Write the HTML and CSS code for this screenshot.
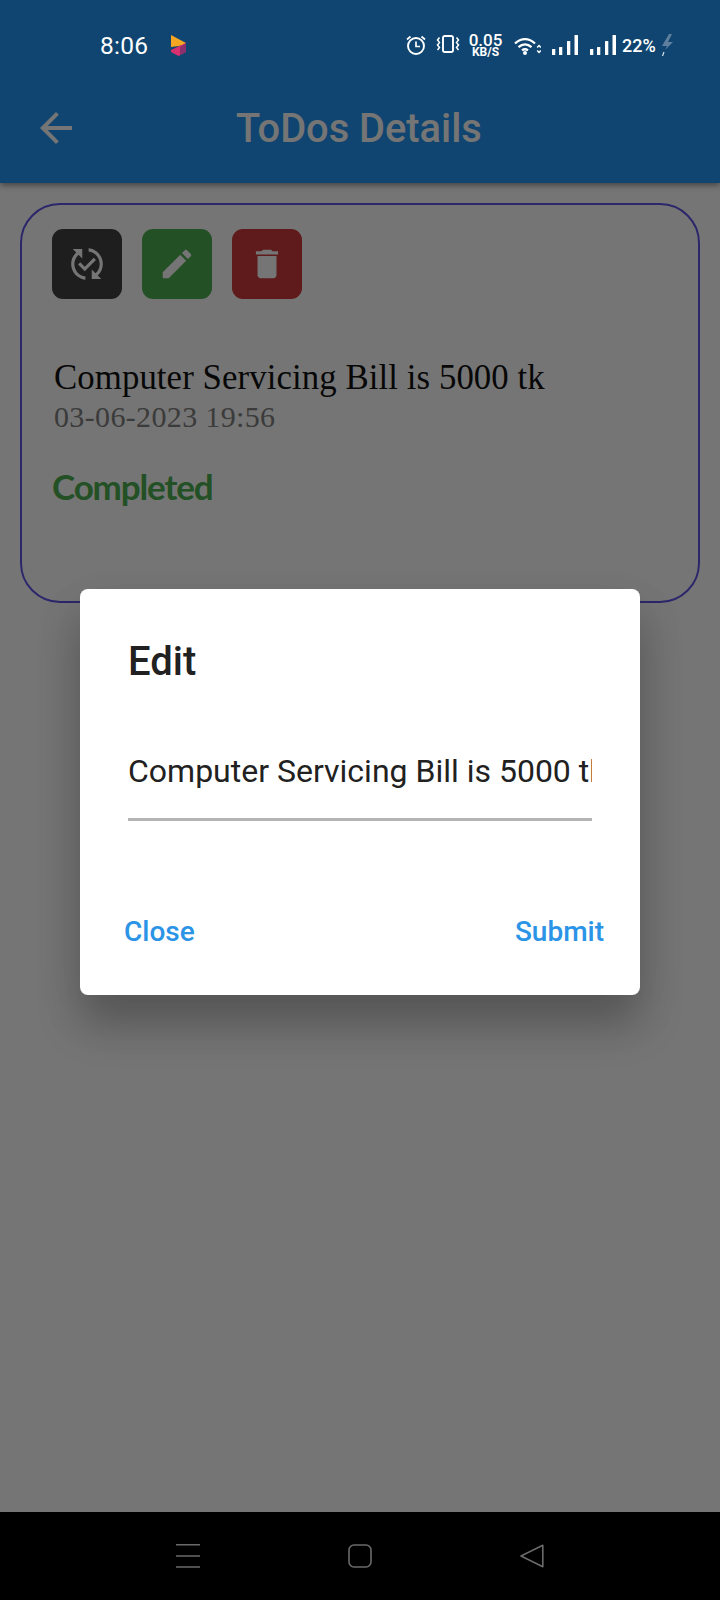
FILE: index.html
```html
<!DOCTYPE html>
<html lang="en">
<head>
<meta charset="utf-8">
<title>ToDos Details</title>
<link rel="stylesheet" href="styles.css">
</head>
<body>
<div class="screen">
  <header class="appbar">
    <div class="status">
      <span class="time">8:06</span>
      <svg class="logo" viewBox="0 0 15 21" width="15" height="21">
        <polygon points="0,0 15,8 15,9 8,11 0,12" fill="#f5a623"/>
        <polygon points="0,15 15,8 15,17 7.5,21 0,17" fill="#d9306f"/>
        <polygon points="15,8 15,17 9,20 9,12" fill="#8c2f6f"/>
      </svg>
      <div class="status-right">
        <svg class="ic-alarm" viewBox="0 0 20 20" width="20" height="20" fill="none" stroke="#fff" stroke-width="1.9"><circle cx="10" cy="11" r="8"/><path d="M10 6.5V11.5H14" stroke-width="1.7"/><path d="M1 4.5 4.5 1.5M19 4.5 15.5 1.5" stroke-width="1.7"/></svg>
        <svg class="ic-vib" viewBox="0 0 24 18" width="24" height="18" fill="none" stroke="#fff" stroke-width="1.9"><rect x="7" y="1" width="10" height="16" rx="1.8"/><path d="M3.500 2.500 1.500 5l2 2.500-2 2.500 2 2.500 -2 2.500M20.500 2.500l2 2.500-2 2.500 2 2.500-2 2.500 2 2.500" stroke-width="1.500"/></svg>
        <div class="speed"><span class="speed-n">0.05</span><span class="speed-u">KB/S</span></div>
        <svg class="ic-wifi" viewBox="0 0 27 18" width="27" height="18" fill="none" stroke="#fff" stroke-width="2.300"><path d="M1 6.500C7 .6 15 .6 21 6.500M4.500 10.200c4-3.700 9-3.700 13 0M8 13.400c1.900-1.500 4.100-1.500 6 0"/><circle cx="11" cy="16" r="2" fill="#fff" stroke="none"/><path d="M23.200 10.500 25 8.600l1.800 1.900M23.200 13.500 25 15.400l1.800-1.900" stroke-width="1.500"/></svg>
        <svg class="ic-sig" viewBox="0 0 26 20" width="26" height="20" fill="#fff"><rect x="0" y="14" width="3.300" height="6" rx=".5"/><rect x="7" y="12" width="3.300" height="8" rx=".5"/><rect x="15" y="6" width="3.300" height="14" rx=".5"/><rect x="22.500" y="0" width="3.500" height="20" rx=".5"/></svg>
        <svg class="ic-sig ic-sig2" viewBox="0 0 26 20" width="26" height="20" fill="#fff"><rect x="0" y="14" width="3.300" height="6" rx=".5"/><rect x="7" y="12" width="3.300" height="8" rx=".5"/><rect x="15" y="6" width="3.300" height="14" rx=".5"/><rect x="22.500" y="0" width="3.500" height="20" rx=".5"/></svg>
        <span class="batt">22%</span>
        <svg class="ic-bolt" viewBox="0 0 13 22" width="13" height="22"><polygon points="8,0 1,12 6,12 4,16 12,8 7,8 11,0" fill="#5f7f9e"/><path d="M3 18 1.500 22" stroke="#dfe7ee" stroke-width="1.200"/></svg>
      </div>
    </div>
    <div class="toolbar">
      <svg class="back" viewBox="0 0 24 24" width="48" height="48"><path d="M20 11H7.830l5.590-5.590L12 4l-8 8 8 8 1.410-1.410L7.830 13H20v-2z"/></svg>
      <h1 class="page-title">ToDos Details</h1>
    </div>
  </header>

  <main class="content">
    <section class="card">
      <div class="actions">
        <button class="act act-dark"><svg viewBox="0 0 24 24" width="38" height="38"><path d="M17.660 9.530l-7.070 7.070-4.240-4.240 1.410-1.410 2.830 2.830 5.660-5.660 1.410 1.410zM4 12c0-2.330 1.020-4.420 2.620-5.880L9 8.500v-6H3l2.200 2.200C3.240 6.520 2 9.110 2 12c0 5.190 3.950 9.450 9 9.950v-2.020C7.060 19.440 4 16.070 4 12zm18 0c0-5.190-3.950-9.450-9-9.950v2.020c3.940.49 7 3.860 7 7.930 0 2.330-1.020 4.420-2.620 5.880L15 15.500v6h6l-2.200-2.200c1.960-1.820 3.200-4.410 3.200-7.300z"/></svg></button>
        <button class="act act-green"><svg viewBox="0 0 24 24" width="38" height="38"><path d="M3 17.250V21h3.750L17.810 9.940l-3.750-3.750L3 17.250zM20.710 7.040c.39-.39.39-1.020 0-1.410l-2.340-2.340c-.39-.39-1.020-.39-1.410 0l-1.830 1.830 3.750 3.750 1.830-1.830z"/></svg></button>
        <button class="act act-red"><svg viewBox="0 0 24 24" width="38" height="38"><path d="M6 19c0 1.100.9 2 2 2h8c1.100 0 2-.9 2-2V7H6v12zM19 4h-3.500l-1-1h-5l-1 1H5v2h14V4z"/></svg></button>
      </div>
      <p class="todo-title">Computer Servicing Bill is 5000 tk</p>
      <p class="todo-date">03-06-2023 19:56</p>
      <p class="todo-status">Completed</p>
    </section>
  </main>

  <nav class="navbar">
    <svg viewBox="0 0 24 24" width="24" height="24" stroke="#6a6a6a" stroke-width="1.600" fill="none"><path d="M0 .8H24M0 12H24M0 23H24"/></svg>
    <svg viewBox="0 0 24 24" width="24" height="24" stroke="#6a6a6a" stroke-width="1.600" fill="none"><rect x="1" y="1" width="22" height="22" rx="5"/></svg>
    <svg viewBox="0 0 24 24" width="24" height="24" stroke="#6a6a6a" stroke-width="1.600" fill="none" stroke-linejoin="round"><path d="M22.800 1.300V22.700L1 12z"/></svg>
  </nav>

  <div class="scrim">
    <div class="dialog">
      <h2 class="dialog-title">Edit</h2>
      <div class="field"><span class="field-text">Computer Servicing Bill is 5000 tk</span></div>
      <div class="dialog-actions">
        <span class="dialog-btn">Close</span>
        <span class="dialog-btn">Submit</span>
      </div>
    </div>
  </div>
</div>
</body>
</html>
```

FILE: styles.css
```css
* { box-sizing: border-box; }
html, body { margin: 0; padding: 0; }
body { font-family: Roboto, "Liberation Sans", sans-serif; background: #fff; }
.screen {
  position: relative;
  width: 720px;
  height: 1600px;
  display: flex;
  flex-direction: column;
  overflow: hidden;
  background: #fff;
}
.appbar {
  height: 183px;
  background: #2196f3;
  box-shadow: 0 2px 6px rgba(0, 0, 0, .45);
  flex: none;
}
.status {
  position: relative;
  z-index: 2;
  height: 90px;
  display: flex;
  align-items: center;
  padding-left: 100px;
  color: #fff;
}
.time { font-size: 24.5px; width: 48px; letter-spacing: .3px; }
.logo { margin-left: 23px; }
.status-right { margin-left: 220px; display: flex; align-items: center; }
.ic-vib { margin-left: 10px; margin-top: -2px; }
.speed { margin-left: 9px; width: 33px; display: flex; flex-direction: column; align-items: center; line-height: 1; }
.speed-n { font-size: 17px; font-weight: 500; line-height: 14px; }
.speed-u { font-size: 12px; font-weight: 700; line-height: 11px; }
.ic-wifi { margin-left: 12px; margin-top: 2px; }
.ic-sig { margin-left: 11px; }
.ic-sig2 { margin-left: 12px; }
.batt { margin-left: 6px; font-size: 18px; font-weight: 500; width: 35px; }
.ic-bolt { margin-left: 4px; }
.toolbar {
  height: 93px;
  display: flex;
  align-items: center;
  padding: 2px 0 19px 32px;
}
.back { fill: #fff; flex: none; }
.page-title {
  margin: 2px 0 0 156px;
  color: #fff;
  font-size: 39.800px;
  font-weight: 500;
  line-height: 48px;
}
.content { flex: 1; padding: 20px 20px 0 20px; }
.card {
  height: 400px;
  border: 2px solid #5f55e8;
  border-radius: 40px;
  padding: 24px 0 0 30px;
}
.actions { display: flex; gap: 20px; }
.act {
  width: 70px;
  height: 70px;
  border: 0;
  padding: 0;
  border-radius: 11px;
  display: flex;
  align-items: center;
  justify-content: center;
}
.act svg { fill: #fff; }
.act-dark { background: #424242; }
.act-green { background: #4caf50; }
.act-red { background: #cf3b3b; }
.todo-title {
  margin: 57px 0 0 2px;
  font-family: "Liberation Serif", serif;
  font-size: 34.800px;
  letter-spacing: .08px;
  line-height: 43px;
  color: #111;
}
.todo-date {
  margin: 0 0 0 2px;
  font-family: "Liberation Serif", serif;
  font-size: 30px;
  letter-spacing: .35px;
  line-height: 36px;
  color: #828282;
}
.todo-status {
  margin: 29px 0 0 0;
  font-family: Lato, sans-serif;
  font-weight: 700;
  font-size: 35px;
  letter-spacing: -1.150px;
  line-height: 44px;
  color: #4caf50;
}
.navbar {
  position: relative;
  z-index: 2;
  height: 88px;
  flex: none;
  background: #000;
  display: flex;
  justify-content: center;
  gap: 148px;
  padding-top: 32px;
}
.scrim {
  position: absolute;
  inset: 0;
  z-index: 1;
  background: rgba(0, 0, 0, .54);
  display: flex;
  justify-content: center;
  align-items: flex-start;
  padding-top: 589px;
}
.dialog {
  width: 560px;
  height: 406px;
  background: #fff;
  border-radius: 8px;
  box-shadow: 0 30px 44px rgba(0, 0, 0, .22), 0 20px 50px rgba(0, 0, 0, .08);
  padding: 49px 36px 0 44px;
}
.dialog-title {
  margin: 0 0 0 4px;
  font-size: 40px;
  font-weight: 500;
  line-height: 48px;
  color: #212121;
}
.field {
  margin: 44px 12px 0 4px;
  height: 91px;
  border-bottom: 3px solid #b4b4b4;
  overflow: hidden;
  white-space: nowrap;
  padding-top: 21px;
}
.field-text { font-size: 32px; line-height: 40px; color: #212121; display: block; width: 100%; overflow: hidden; }
.dialog-actions {
  margin-top: 91px;
  display: flex;
  justify-content: space-between;
}
.dialog-btn { font-size: 28px; font-weight: 500; line-height: 40px; color: #2b94e6; }
```
